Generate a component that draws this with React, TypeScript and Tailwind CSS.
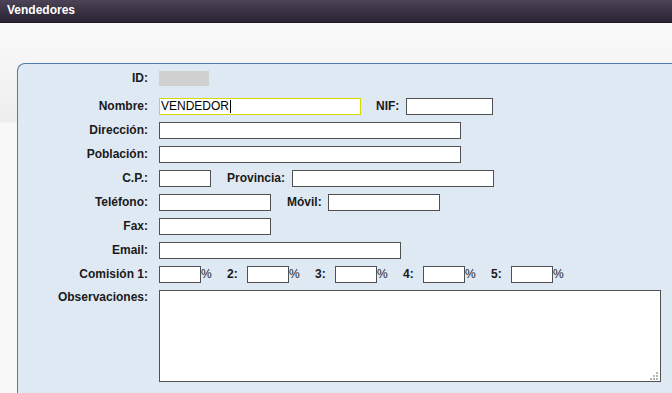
import { ReactNode } from 'react';

interface RowProps {
  label: string;
  children?: ReactNode;
}

const Row = ({ label, children }: RowProps) => (
  <div className="flex h-6 items-center">
    <span className="w-[130px] shrink-0 text-right font-bold text-[#1a1a1a]">{label}</span>
    <div className="ml-[11px] flex items-center">{children}</div>
  </div>
);

const Field = ({ w }: { w: string }) => (
  <input readOnly className={`h-[17px] border border-[#505050] bg-white px-[1px] ${w}`} />
);

const Pct = ({ first, label }: { first?: boolean; label?: string }) => (
  <>
    {!first && <span className="ml-[16px] w-[20px] font-bold text-[#1a1a1a]">{label}</span>}
    <input readOnly className="h-[17px] w-[42px] border border-[#505050] bg-white" />
    <span className="w-[10px] text-[#1a1a1a]">%</span>
  </>
);

export default function App() {
  return (
    <div className="h-screen overflow-hidden bg-[#f8f8f8] font-['Liberation_Sans',Arial,sans-serif] text-[12px]">
      <header className="h-[23px] border-b border-[#1d1922] bg-gradient-to-b from-[#4c4456] to-[#2a2333] px-[7px] text-[12px] font-bold leading-[21px] text-white">
        Vendedores
      </header>

      <div className="h-full bg-[linear-gradient(to_bottom,#fafafa_0px,#eeeeee_99px,#f8f8f8_100px)] pl-[17px] pt-[40px]">
        <div className="h-full rounded-tl-[8px] border-l border-t border-[#4c7db0] bg-[#dfe9f4] pt-[2px]">
          <Row label="ID:">
            <div className="h-[15px] w-[50px] bg-[#d0d0d0]" />
          </Row>

          <div className="mt-1">
            <Row label="Nombre:">
              <div className="flex h-[17px] w-[202px] items-center border border-[#d8d800] bg-white pl-[1px] text-black">
                <span>VENDEDOR</span>
                <span className="ml-[1px] h-[13px] w-px bg-black" />
              </div>
              <span className="ml-[15px] w-[30px] font-bold text-[#1a1a1a]">NIF:</span>
              <Field w="w-[87px]" />
            </Row>
          </div>

          <Row label="Dirección:">
            <Field w="w-[302px]" />
          </Row>

          <Row label="Población:">
            <Field w="w-[302px]" />
          </Row>

          <Row label="C.P.:">
            <Field w="w-[52px]" />
            <span className="ml-[16px] w-[65px] font-bold text-[#1a1a1a]">Provincia:</span>
            <Field w="w-[202px]" />
          </Row>

          <Row label="Teléfono:">
            <Field w="w-[112px]" />
            <span className="ml-[16px] w-[41px] font-bold text-[#1a1a1a]">Móvil:</span>
            <Field w="w-[112px]" />
          </Row>

          <Row label="Fax:">
            <Field w="w-[112px]" />
          </Row>

          <Row label="Email:">
            <Field w="w-[242px]" />
          </Row>

          <Row label="Comisión 1:">
            <Pct first />
            <Pct label="2:" />
            <Pct label="3:" />
            <Pct label="4:" />
            <Pct label="5:" />
          </Row>

          <div className="mt-1 flex items-start">
            <span className="w-[130px] shrink-0 text-right font-bold leading-[14px] text-[#1a1a1a]">
              Observaciones:
            </span>
            <div className="relative ml-[11px]">
              <textarea readOnly className="block h-[92px] w-[502px] resize-none border border-[#505050] bg-white" />
              <svg className="absolute bottom-[2px] right-[3px]" width="8" height="8" viewBox="0 0 8 8">
                <g fill="#b4b4b4">
                  <rect x="6" y="0" width="2" height="2" />
                  <rect x="3" y="3" width="2" height="2" />
                  <rect x="6" y="3" width="2" height="2" />
                  <rect x="0" y="6" width="2" height="2" />
                  <rect x="3" y="6" width="2" height="2" />
                  <rect x="6" y="6" width="2" height="2" />
                </g>
              </svg>
            </div>
          </div>
        </div>
      </div>
    </div>
  );
}
